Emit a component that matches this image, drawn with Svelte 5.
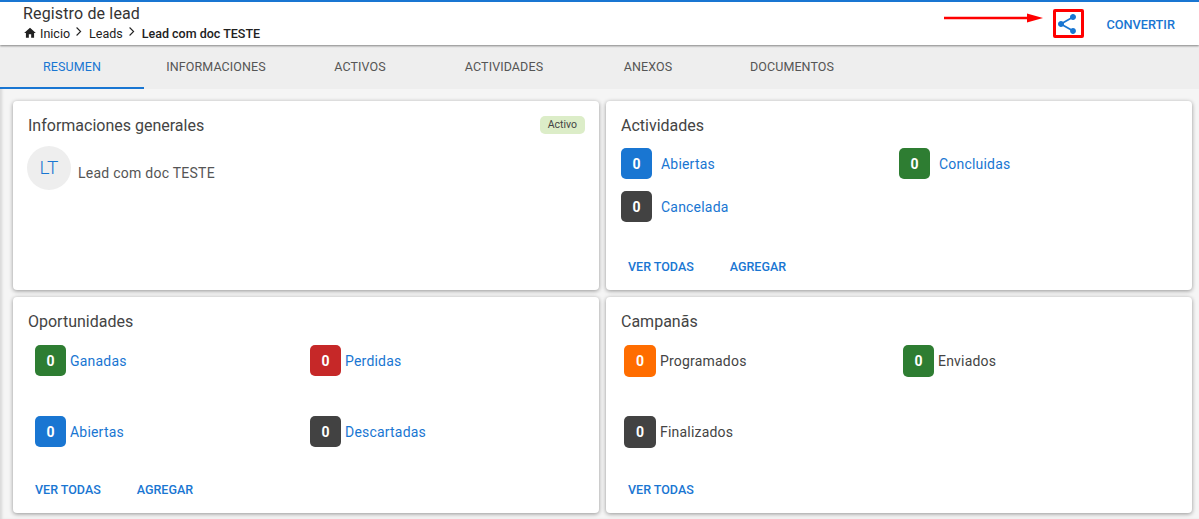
<script>
  const tabs = ['Resumen', 'Informaciones', 'Activos', 'Actividades', 'Anexos', 'Documentos']
  const active = 'Resumen'

  const atividades = [
    { n: 0, label: 'Abiertas', color: 'blue' },
    { n: 0, label: 'Concluidas', color: 'green' },
    { n: 0, label: 'Cancelada', color: 'dark' }
  ]
  const oportunidades = [
    { n: 0, label: 'Ganadas', color: 'green' },
    { n: 0, label: 'Perdidas', color: 'red' },
    { n: 0, label: 'Abiertas', color: 'blue' },
    { n: 0, label: 'Descartadas', color: 'dark' }
  ]
  const campanas = [
    { n: 0, label: 'Programados', color: 'orange' },
    { n: 0, label: 'Enviados', color: 'green' },
    { n: 0, label: 'Finalizados', color: 'dark' }
  ]
</script>

<div class="page">
  <header class="topbar">
    <div class="heading">
      <div class="title">Registro de lead</div>
      <nav class="crumbs">
        <svg class="home" viewBox="0 0 24 24" width="14" height="14"><path d="M10 20v-6h4v6h5v-8h3L12 3 2 12h3v8z" fill="#212121" /></svg>
        <span>Inicio</span>
        <svg class="chev" viewBox="0 0 10 12" width="8" height="11"><path d="M2 1 7 6l-5 5" fill="none" stroke="#222" stroke-width="1.4" /></svg>
        <span>Leads</span>
        <svg class="chev" viewBox="0 0 10 12" width="8" height="11"><path d="M2 1 7 6l-5 5" fill="none" stroke="#222" stroke-width="1.4" /></svg>
        <strong>Lead com doc TESTE</strong>
      </nav>
    </div>
    <div class="actions">
      <button class="share" aria-label="Compartir">
        <svg viewBox="0 0 24 24" width="24" height="24">
          <path d="M18 16.08c-.76 0-1.44.3-1.96.77L8.91 12.7c.05-.23.09-.46.09-.7s-.04-.47-.09-.7l7.05-4.11c.54.5 1.25.81 2.04.81 1.66 0 3-1.34 3-3s-1.34-3-3-3-3 1.34-3 3c0 .24.04.47.09.7L8.04 9.81C7.5 9.31 6.79 9 6 9c-1.66 0-3 1.34-3 3s1.34 3 3 3c.79 0 1.5-.31 2.04-.81l7.12 4.16c-.05.21-.08.43-.08.65 0 1.61 1.31 2.92 2.92 2.92s2.92-1.31 2.92-2.92-1.31-2.92-2.92-2.92z" fill="#1976d2" />
        </svg>
      </button>
      <button class="convert">CONVERTIR</button>
    </div>
    <!-- annotation drawn over the screenshot -->
    <svg class="arrow" viewBox="0 0 100 10" width="100" height="10">
      <path d="M0 5h84" stroke="#f00" stroke-width="2.4" />
      <path d="M83 .6l16 4.4-16 4.4z" fill="#f00" />
    </svg>
    <div class="highlight"></div>
  </header>

  <div class="tabs">
    {#each tabs as tab}
      <div class="tab" class:active={tab === active}>{tab}</div>
    {/each}
  </div>

  <main class="grid">
    <section class="card info">
      <h2>Informaciones generales</h2>
      <span class="chip">Activo</span>
      <div class="person">
        <div class="avatar">LT</div>
        <div class="person-name">Lead com doc TESTE</div>
      </div>
    </section>

    <section class="card act">
      <h2>Actividades</h2>
      <div class="stats">
        {#each atividades as s}
          <div class="stat">
            <span class="num {s.color}">{s.n}</span>
            <a href="#top">{s.label}</a>
          </div>
        {/each}
      </div>
      <div class="links">
        <a href="#top">VER TODAS</a>
        <a href="#top">AGREGAR</a>
      </div>
    </section>

    <section class="card opp">
      <h2>Oportunidades</h2>
      <div class="stats">
        {#each oportunidades as s}
          <div class="stat">
            <span class="num {s.color}">{s.n}</span>
            <a href="#top">{s.label}</a>
          </div>
        {/each}
      </div>
      <div class="links">
        <a href="#top">VER TODAS</a>
        <a href="#top">AGREGAR</a>
      </div>
    </section>

    <section class="card camp">
      <h2>Campanãs</h2>
      <div class="stats">
        {#each campanas as s}
          <div class="stat">
            <span class="num {s.color}">{s.n}</span>
            <span class="plain">{s.label}</span>
          </div>
        {/each}
      </div>
      <div class="links">
        <a href="#top">VER TODAS</a>
      </div>
    </section>
  </main>
</div>

<style>
  :global(body) {
    margin: 0;
    background: #f5f5f5;
    font-family: Roboto, "Liberation Sans", sans-serif;
  }

  .page {
    height: 519px;
    overflow: hidden;
    position: relative;
    box-shadow: inset 3px 0 3px -1px rgba(0, 0, 0, 0.12);
  }

  /* ── Top bar ── */
  .topbar {
    height: 43px;
    box-sizing: content-box;
    border-top: 2px solid #1976d2;
    background: #fff;
    display: flex;
    justify-content: space-between;
    padding-left: 23px;
    box-shadow: 0 1px 2px rgba(0, 0, 0, 0.45);
    position: relative;
    z-index: 2;
  }

  .title {
    font-size: 16px;
    line-height: 18px;
    margin-top: 3px;
    color: #333;
    letter-spacing: 0.15px;
  }

  .crumbs {
    display: flex;
    align-items: center;
    gap: 3px;
    height: 16px;
    margin-top: 2px;
    font-size: 12.5px;
    color: #212121;
  }

  .crumbs strong {
    font-weight: 500;
  }

  .chev {
    margin: -3px 3px 0 2px;
  }

  .home {
    margin-left: 0;
  }

  .actions {
    display: flex;
    align-items: center;
    height: 43px;
    margin-top: -2px;
    padding-right: 24px;
    gap: 27px;
  }

  .share {
    border: 0;
    background: none;
    padding: 0;
    width: 24px;
    height: 24px;
    margin-top: 5px;
  }

  .convert {
    border: 0;
    background: none;
    padding: 0;
    font-family: inherit;
    font-size: 12.75px;
    font-weight: 500;
    color: #1976d2;
    margin-top: 5px;
  }

  .arrow {
    position: absolute;
    left: 944px;
    top: 11px;
  }

  .highlight {
    position: absolute;
    left: 1053px;
    top: 7px;
    width: 25px;
    height: 23px;
    border: 3px solid #f00;
    border-radius: 2px;
  }

  /* ── Tabs ── */
  .tabs {
    display: flex;
    height: 44px;
    background: #eeeeee;
  }

  .tab {
    width: 144px;
    box-sizing: border-box;
    text-align: center;
    line-height: 44px;
    font-size: 12.5px;
    text-transform: uppercase;
    color: #555;
    letter-spacing: 0.1px;
  }

  .tab.active {
    color: #1976d2;
    border-bottom: 2px solid #1976d2;
  }

  /* ── Cards ── */
  .grid {
    display: grid;
    grid-template-columns: 586px 586px;
    grid-template-rows: 189px 216px;
    gap: 7px;
    padding: 12px 0 0 13px;
  }

  .card {
    position: relative;
    background: #fff;
    border-radius: 4px;
    box-shadow: 0 1px 4px rgba(0, 0, 0, 0.4);
    padding: 15px;
    box-sizing: border-box;
    display: flex;
    flex-direction: column;
  }

  h2 {
    margin: 0;
    font-size: 16px;
    line-height: 20px;
    font-weight: 400;
    color: #444;
  }

  .chip {
    position: absolute;
    top: 15px;
    right: 14px;
    height: 18px;
    line-height: 18px;
    padding: 0 8px;
    border-radius: 5px;
    background: #dcedc8;
    color: #444;
    font-size: 10.5px;
  }

  .person {
    display: flex;
    margin: 10px 0 0 -1px;
  }

  .avatar {
    width: 44px;
    height: 44px;
    border-radius: 50%;
    background: #eeeeee;
    color: #1976d2;
    font-size: 19px;
    font-weight: 300;
    line-height: 44px;
    text-align: center;
  }

  .person-name {
    margin: 18px 0 0 7px;
    font-size: 14px;
    line-height: 18px;
    color: #555;
    letter-spacing: 0.25px;
  }

  .stats {
    display: grid;
    grid-template-columns: repeat(2, 1fr);
  }

  .stat {
    display: flex;
    align-items: center;
    font-size: 14px;
    letter-spacing: 0.2px;
  }

  .num {
    width: 31px;
    height: 31px;
    border-radius: 5px;
    color: #fff;
    font-size: 14px;
    font-weight: 700;
    display: flex;
    align-items: center;
    justify-content: center;
    flex: none;
  }

  .blue { background: #1976d2; }
  .green { background: #2e7d32; }
  .red { background: #c62828; }
  .dark { background: #424242; }
  .orange { background: #ff6d00; }

  a {
    color: #1976d2;
    text-decoration: none;
  }

  .plain {
    color: #444;
  }

  .act .stats {
    margin-top: 12px;
    grid-template-columns: 278px 1fr;
    row-gap: 12px;
  }

  .act .num {
    margin-right: 9px;
  }

  .opp .stats {
    margin: 13px 0 0 7px;
    grid-template-columns: 275px 1fr;
    row-gap: 40px;
  }

  .opp .num {
    margin-right: 4px;
  }

  .camp .stats {
    margin: 13px 0 0 3px;
    grid-template-columns: 279px 1fr;
    row-gap: 39px;
  }

  .camp .num {
    width: 32px;
    height: 32px;
    margin-right: 4px;
  }

  .camp .num.green {
    width: 31px;
  }

  .links {
    margin-top: auto;
    display: flex;
    gap: 36px;
    padding: 0 0 0 7px;
    font-size: 12.5px;
    font-weight: 500;
    line-height: 16px;
  }
</style>
